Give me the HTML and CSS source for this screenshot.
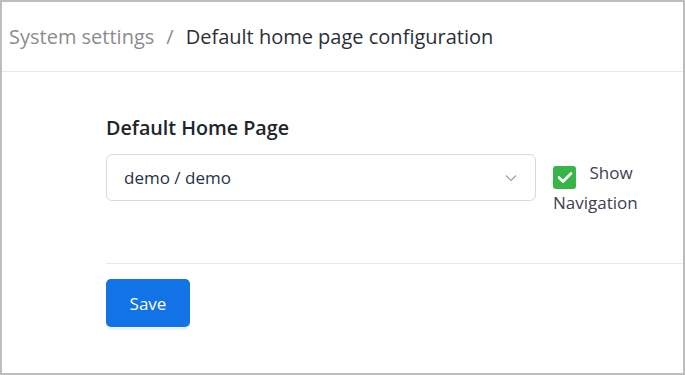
FILE: index.html
```html
<!DOCTYPE html>
<html>
<head>
<meta charset="utf-8">
<link rel="stylesheet" href="styles.css">
</head>
<body>
<div class="frame">
  <header class="header">
    <span class="crumb-parent">System settings</span>
    <span class="crumb-sep">/</span>
    <span class="crumb-current">Default home page configuration</span>
  </header>
  <main class="content">
    <div class="label">Default Home Page</div>
    <div class="row">
      <div class="select">
        <span class="select-value">demo / demo</span>
        <svg class="chevron" width="12" height="8" viewBox="0 0 12 8"><path d="M1 1.5 L6 6.5 L11 1.5" fill="none" stroke="#a0a0a0" stroke-width="1.2"/></svg>
      </div>
      <label class="check">
        <span class="box"><svg width="16" height="13" viewBox="0 0 16 13"><path d="M2 6.5 L6 10.5 L14 2.5" fill="none" stroke="#fff" stroke-width="2.6" stroke-linecap="round" stroke-linejoin="round"/></svg></span>
        <span class="check-text">Show Navigation</span>
      </label>
    </div>
    <div class="divider"></div>
    <button class="save">Save</button>
  </main>
</div>
</body>
</html>
```
FILE: styles.css
```css
html, body { margin: 0; padding: 0; background: #fff; }
body { font-family: "Open Sans", "Noto Sans", sans-serif; }
.frame {
  width: 685px; height: 375px; box-sizing: border-box;
  border: 2px solid #bdbdbd; overflow: hidden; background: #fff;
}
.header {
  height: 69px; border-bottom: 1px solid #e8e8e8;
  display: flex; align-items: center; padding-left: 7px;
  font-size: 20px;
}
.crumb-parent { color: #8c8c8c; }
.crumb-sep { color: #8c8c8c; margin: 0 12px 0 12px; }
.crumb-current { color: #2b2f38; }
.content { padding-left: 104px; padding-top: 44px; }
.label { font-size: 19.7px; font-weight: 600; color: #212529; line-height: 24px; }
.row { display: flex; align-items: flex-start; margin-top: 14px; }
.select {
  width: 430px; height: 47px; box-sizing: border-box;
  border: 1px solid #d9d9d9; border-radius: 6px;
  display: flex; align-items: center; justify-content: space-between;
  padding: 0 18px 0 17px;
  font-size: 17px; color: #26324a;
}
.chevron { margin-top: 1px; }
.check { display: block; width: 95px; margin-left: 17px; margin-top: 5px; font-size: 17px; line-height: 27px; color: #3c4150; }
.box {
  display: inline-flex; align-items: center; justify-content: center;
  width: 23px; height: 23px; background: #38b449; border-radius: 3px;
  vertical-align: -5px; margin-right: 9px;
}
.divider { height: 1px; background: #e8e8e8; margin-top: 47px; }
.save {
  margin-top: 15px; width: 84px; height: 48px;
  background: #1273e6; color: #fff; border: none; border-radius: 5px;
  font-family: inherit; font-size: 17px;
  box-shadow: 0 3px 0 #f1f1f1;
}
```
